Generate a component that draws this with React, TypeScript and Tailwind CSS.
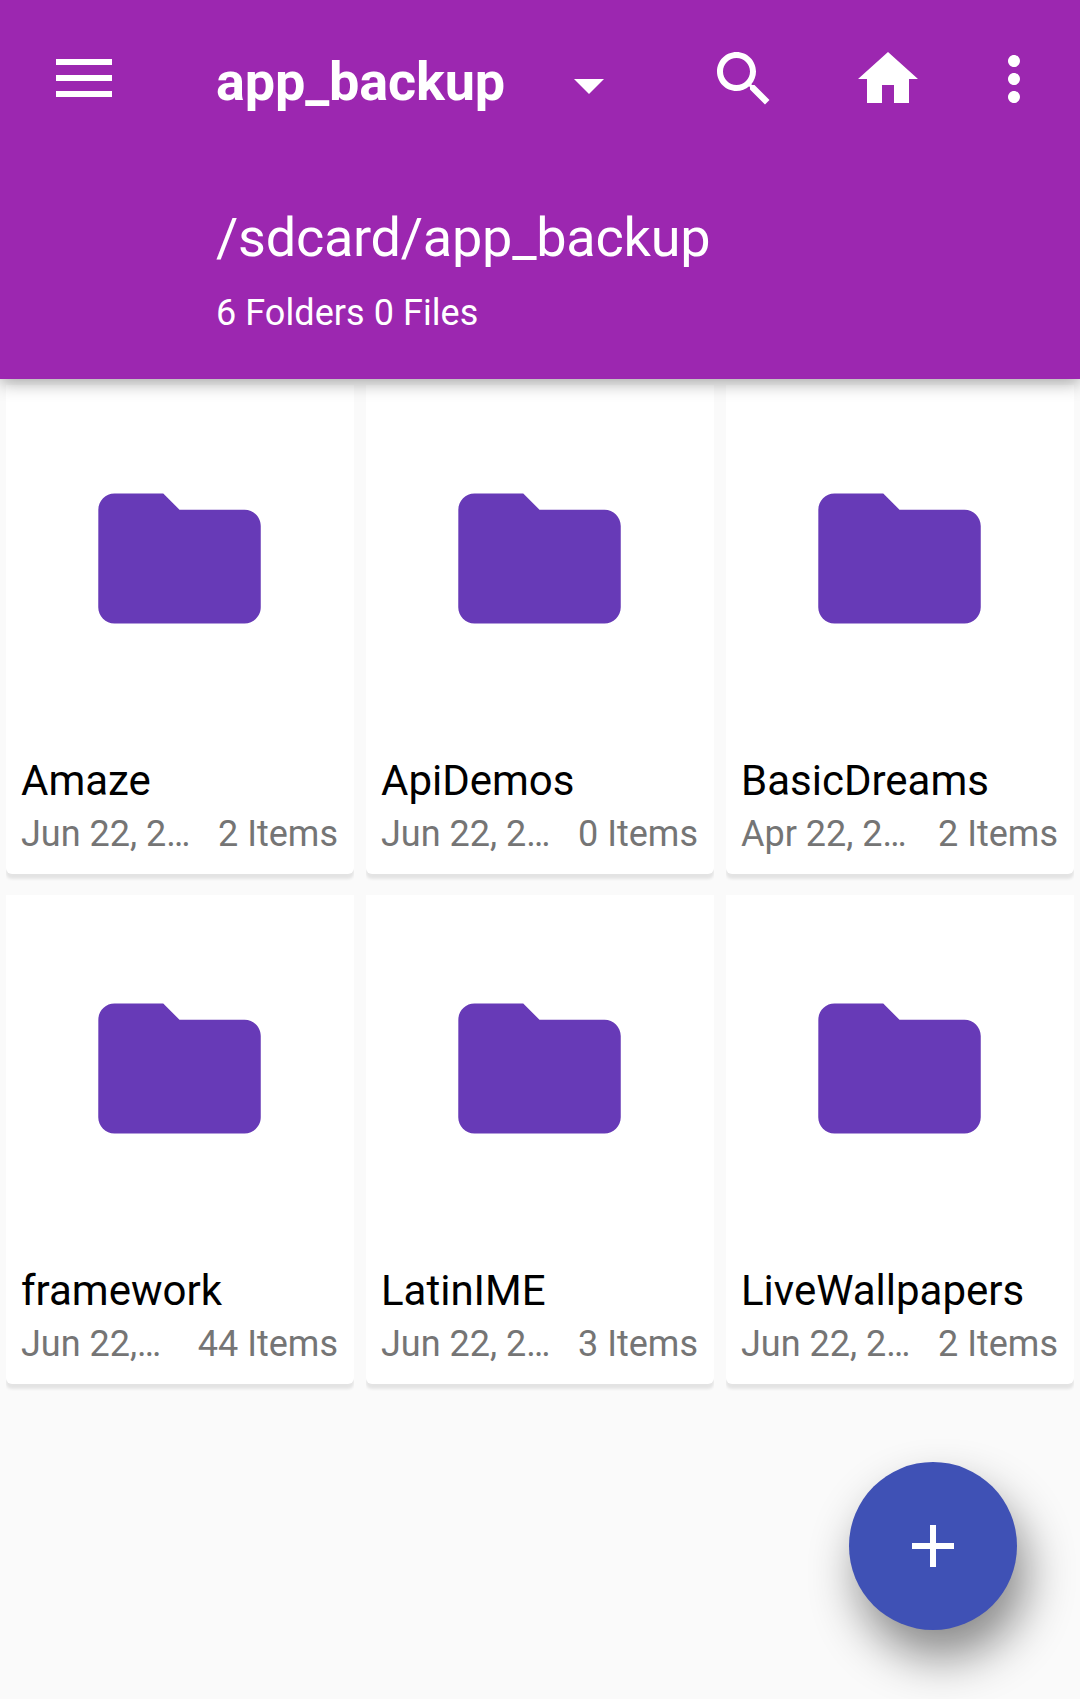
import React from "react";

type Folder = { name: string; date: string; items: string };

const folders: Folder[] = [
  { name: "Amaze", date: "Jun 22, 2…", items: "2 Items" },
  { name: "ApiDemos", date: "Jun 22, 2…", items: "0 Items" },
  { name: "BasicDreams", date: "Apr 22, 2…", items: "2 Items" },
  { name: "framework", date: "Jun 22,…", items: "44 Items" },
  { name: "LatinIME", date: "Jun 22, 2…", items: "3 Items" },
  { name: "LiveWallpapers", date: "Jun 22, 2…", items: "2 Items" },
];

function Icon({ d, className }: { d: string; className: string }) {
  return (
    <svg viewBox="0 0 24 24" className={`shrink-0 fill-current ${className}`} aria-hidden="true">
      <path d={d} />
    </svg>
  );
}

const SEARCH =
  "M15.5 14h-.79l-.28-.27C15.41 12.59 16 11.11 16 9.5 16 5.91 13.09 3 9.5 3S3 5.91 3 9.5 5.91 16 9.5 16c1.61 0 3.09-.59 4.23-1.57l.27.28v.79l5 4.99L20.49 19l-4.99-5zm-6 0C7.01 14 5 11.99 5 9.5S7.01 5 9.5 5 14 7.01 14 9.5 11.99 14 9.5 14z";
const HOME = "M10 20v-6h4v6h5v-8h3L12 3 2 12h3v8z";
const MORE =
  "M12 8c1.1 0 2-.9 2-2s-.9-2-2-2-2 .9-2 2 .9 2 2 2zm0 2c-1.1 0-2 .9-2 2s.9 2 2 2 2-.9 2-2-.9-2-2-2zm0 6c-1.1 0-2 .9-2 2s.9 2 2 2 2-.9 2-2-.9-2-2-2z";
const FOLDER =
  "M10 4H4c-1.1 0-1.99.9-1.99 2L2 18c0 1.1.9 2 2 2h16c1.1 0 2-.9 2-2V8c0-1.1-.9-2-2-2h-8l-2-2z";

function Header() {
  return (
    <header className="relative z-10 h-[379px] bg-[#9c27b0] text-white shadow-[0_4px_16px_rgba(0,0,0,0.34)]">
      <div className="flex h-[206px] items-start">
        <button className="mt-[59px] ml-14 flex w-14 shrink-0 flex-col gap-[10px]" aria-label="Menu">
          <span className="h-1.5 w-full bg-white" />
          <span className="h-1.5 w-full bg-white" />
          <span className="h-1.5 w-full bg-white" />
        </button>
        <h1 className="mt-[50px] ml-[104px] w-[337px] text-[54px] leading-[64px] font-bold tracking-[-0.15px]">
          app_backup
        </h1>
        <Icon d="M7 10l5 5 5-5z" className="mt-[49px] size-[72px]" />
        <Icon d={SEARCH} className="mt-[43px] ml-[83px] size-[72px]" />
        <Icon d={HOME} className="mt-[43px] ml-[72px] size-[72px]" />
        <Icon d={MORE} className="mt-[43px] ml-[54px] size-[72px]" />
      </div>
      <div className="pl-[216px]">
        <p className="text-[54px] leading-[64px] tracking-[-0.24px]">/sdcard/app_backup</p>
        <p className="mt-[22px] text-[36px] leading-[42px] tracking-[0.06px]">6 Folders 0 Files</p>
      </div>
    </header>
  );
}

function FolderCard({ name, date, items }: Folder) {
  return (
    <div className="h-[510px] overflow-hidden">
      <article className="flex h-[489px] flex-col rounded-b-md bg-white pr-4 pl-[15px] shadow-[0_5px_3px_rgba(0,0,0,0.09)]">
        <Icon d={FOLDER} className="mt-[76px] ml-[61px] size-[195px] text-[#673ab7]" />
        <h2 className="mt-[100px] text-[42px] leading-[50px] whitespace-nowrap text-black">{name}</h2>
        <div className="mt-[7px] flex justify-between text-[36px] leading-[42px] whitespace-nowrap text-[#757575]">
          <span>{date}</span>
          <span>{items}</span>
        </div>
      </article>
    </div>
  );
}

export default function App() {
  return (
    <div className="relative h-[1699px] w-[1080px] overflow-hidden bg-[#fafafa] font-['Roboto',sans-serif]">
      <Header />
      <main className="grid grid-cols-3 gap-x-3 px-1.5 pt-1.5">
        {folders.map((folder) => (
          <FolderCard key={folder.name} {...folder} />
        ))}
      </main>
      <button
        className="absolute right-[63px] bottom-[69px] flex size-[168px] items-center justify-center rounded-full bg-[#3f51b5] text-white shadow-[9px_27px_48px_rgba(0,0,0,0.46)]"
        aria-label="Add"
      >
        <Icon d="M19 13h-6v6h-2v-6H5v-2h6V5h2v6h6v2z" className="size-[72px]" />
      </button>
    </div>
  );
}
